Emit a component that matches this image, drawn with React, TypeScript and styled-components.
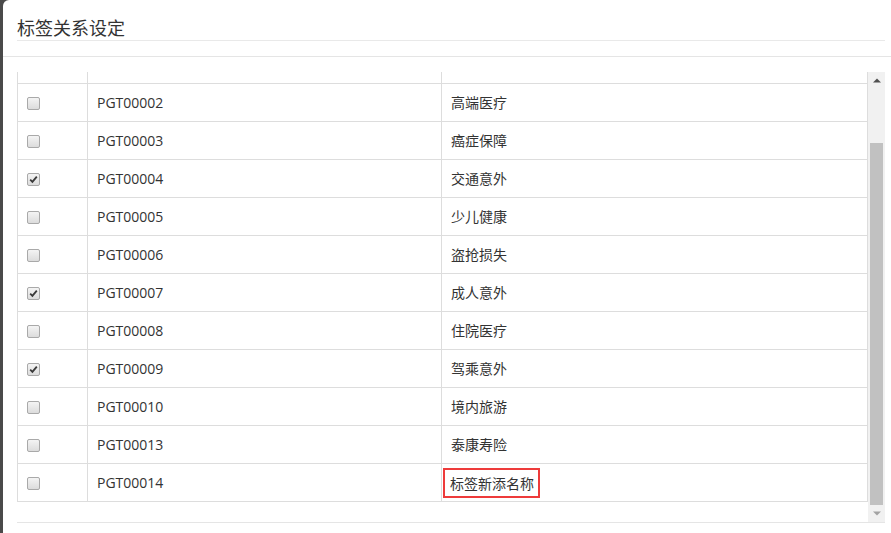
import React, { useLayoutEffect, useRef } from "react";
import styled, { createGlobalStyle } from "styled-components";

const GlobalStyle = createGlobalStyle`
  html, body { margin: 0; padding: 0; }
  body {
    background: #4a4a4a;
    font-family: "Open Sans", "Noto Sans CJK SC", sans-serif;
    color: #333;
    overflow: hidden;
  }
`;

const Page = styled.div`
  width: 891px;
  height: 533px;
  display: flex;
  overflow: hidden;
`;

const Modal = styled.div`
  margin-left: 3px;
  width: 900px;
  height: 560px;
  background: #fff;
  border-top-left-radius: 6px;
  display: flex;
  flex-direction: column;
`;

const Header = styled.div`
  padding: 14px 15px 15px 14px;
  border-bottom: 1px solid #e5e5e5;
`;

const Title = styled.h4`
  margin: 0;
  font-family: "Noto Sans CJK SC", "Open Sans", sans-serif;
  font-weight: 400;
  font-size: 18px;
  line-height: 26px;
  color: #333;
  border-bottom: 1px solid #e9e9e9;
`;

const Body = styled.div`
  padding: 15px 15px 0 14px;
`;

const ScrollBox = styled.div`
  display: flex;
  width: 868px;
  border-bottom: 1px solid #e5e5e5;
`;

const Viewport = styled.div`
  width: 851px;
  height: 450px;
  overflow: hidden;
`;

const Table = styled.table`
  width: 851px;
  border-collapse: collapse;
  table-layout: fixed;
  font-size: 14px;
`;

const Col = styled.col<{ $w?: number }>`
  ${(p) => (p.$w ? `width: ${p.$w}px;` : "")}
`;

const Cell = styled.td<{ $open?: boolean }>`
  height: 37px;
  padding: 0 9px;
  border: 1px solid #dddddd;
  ${(p) => (p.$open ? "border-left: none; border-right: none; border-bottom: none;" : "")}
  vertical-align: middle;
  line-height: 20px;
  color: #333;
  white-space: nowrap;
`;

const NameText = styled.span`
  font-family: "Noto Sans CJK SC", sans-serif;
  font-size: 14px;
`;

const Highlight = styled.span`
  display: inline-block;
  margin-left: -8px;
  padding: 3px 4px 3px 5px;
  border: 2px solid #ee3b3b;
  font-family: "Noto Sans CJK SC", sans-serif;
  line-height: 20px;
`;

const Box = styled.span`
  display: inline-flex;
  align-items: center;
  justify-content: center;
  width: 11px;
  height: 11px;
  border: 1px solid #a9a9a9;
  border-radius: 2px;
  background: linear-gradient(#f4f4f4, #dcdcdc);
  vertical-align: middle;
`;

const ScrollBar = styled.div`
  width: 17px;
  height: 450px;
  background: #f1f1f1;
  display: flex;
  flex-direction: column;
`;

const Arrow = styled.div`
  height: 17px;
  display: flex;
  align-items: center;
  justify-content: center;
`;

const Track = styled.div`
  flex: 1;
  display: flex;
  flex-direction: column;
  padding: 0 2px;
`;

const Thumb = styled.div`
  margin-top: 54px;
  flex: 1;
  background: #c1c1c1;
`;

function Checkbox({ checked }: { checked?: boolean }) {
  return (
    <Box>
      {checked && (
        <svg width="9" height="9" viewBox="0 0 9 9">
          <path d="M1.2 4.6 L3.4 6.8 L7.8 1.6" fill="none" stroke="#3a3a3a" strokeWidth="1.8" />
        </svg>
      )}
    </Box>
  );
}

const rows: { code: string; name: string; checked?: boolean; mark?: boolean }[] = [
  { code: "PGT00002", name: "高端医疗" },
  { code: "PGT00003", name: "癌症保障" },
  { code: "PGT00004", name: "交通意外", checked: true },
  { code: "PGT00005", name: "少儿健康" },
  { code: "PGT00006", name: "盗抢损失" },
  { code: "PGT00007", name: "成人意外", checked: true },
  { code: "PGT00008", name: "住院医疗" },
  { code: "PGT00009", name: "驾乘意外", checked: true },
  { code: "PGT00010", name: "境内旅游" },
  { code: "PGT00013", name: "泰康寿险" },
  { code: "PGT00014", name: "标签新添名称", mark: true },
];

export default function App() {
  const ref = useRef<HTMLDivElement>(null);
  useLayoutEffect(() => {
    if (ref.current) ref.current.scrollTop = 27;
  }, []);
  return (
    <>
      <GlobalStyle />
      <Page>
        <Modal>
          <Header>
            <Title>标签关系设定</Title>
          </Header>
          <Body>
            <ScrollBox>
              <Viewport ref={ref}>
                <Table>
                  <colgroup>
                    <Col $w={70} />
                    <Col $w={354} />
                    <Col />
                  </colgroup>
                  <tbody>
                    <tr>
                      <Cell />
                      <Cell />
                      <Cell />
                    </tr>
                    {rows.map((r) => (
                      <tr key={r.code}>
                        <Cell>
                          <Checkbox checked={r.checked} />
                        </Cell>
                        <Cell>{r.code}</Cell>
                        <Cell>
                          {r.mark ? <Highlight>{r.name}</Highlight> : <NameText>{r.name}</NameText>}
                        </Cell>
                      </tr>
                    ))}
                    <tr>
                      <Cell $open />
                      <Cell $open />
                      <Cell $open />
                    </tr>
                  </tbody>
                </Table>
              </Viewport>
              <ScrollBar>
                <Arrow>
                  <svg width="8" height="5" viewBox="0 0 8 5">
                    <path d="M0 4.5 L4 0.5 L8 4.5 Z" fill="#505050" />
                  </svg>
                </Arrow>
                <Track>
                  <Thumb />
                </Track>
                <Arrow>
                  <svg width="8" height="5" viewBox="0 0 8 5">
                    <path d="M0 0.5 L4 4.5 L8 0.5 Z" fill="#a3a3a3" />
                  </svg>
                </Arrow>
              </ScrollBar>
            </ScrollBox>
          </Body>
        </Modal>
      </Page>
    </>
  );
}
